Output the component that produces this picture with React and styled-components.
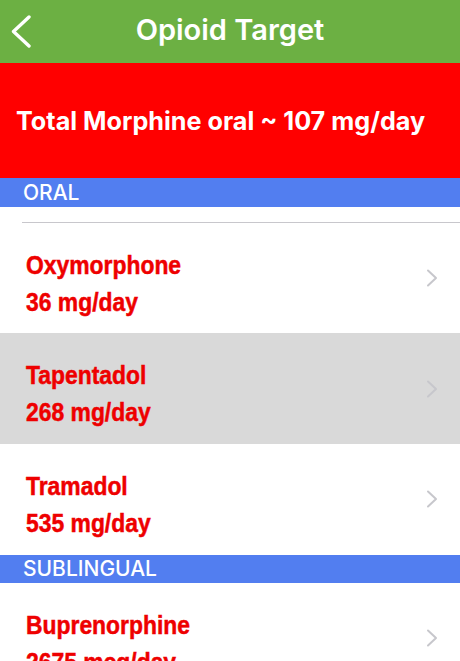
import React from "react";
import styled, { createGlobalStyle } from "styled-components";

const GlobalStyle = createGlobalStyle`
  html, body {
    margin: 0;
    padding: 0;
    background: #ffffff;
  }
  body {
    font-family: Inter, "Liberation Sans", Arial, sans-serif;
    overflow: hidden;
  }
`;

const sections = [
  {
    title: "ORAL",
    drugs: [
      { name: "Oxymorphone", dose: "36 mg/day" },
      { name: "Tapentadol", dose: "268 mg/day", selected: true },
      { name: "Tramadol", dose: "535 mg/day" },
    ],
  },
  {
    title: "SUBLINGUAL",
    drugs: [{ name: "Buprenorphine", dose: "2675 mcg/day" }],
  },
];

const BackIcon = () => (
  <svg width="22" height="34" viewBox="0 0 22 34">
    <path
      d="M19 2 L3.5 16.5 L19 31"
      fill="none"
      stroke="#ffffff"
      strokeWidth="3.4"
      strokeLinecap="round"
      strokeLinejoin="round"
    />
  </svg>
);

const Chevron = () => (
  <svg width="12" height="18" viewBox="0 0 12 18">
    <path
      d="M2 1.5 L10 9 L2 16.5"
      fill="none"
      stroke="#c7c7cc"
      strokeWidth="2"
      strokeLinecap="round"
      strokeLinejoin="round"
    />
  </svg>
);

const App = () => {
  return (
    <>
      <GlobalStyle />
      <Screen>
        <NavBar>
          <BackButton>
            <BackIcon />
          </BackButton>
          <NavTitle>Opioid Target</NavTitle>
        </NavBar>
        <Banner>Total Morphine oral ~ 107 mg/day</Banner>
        {sections.map((section, i) => (
          <section key={section.title}>
            <SectionHeader>{section.title}</SectionHeader>
            {i === 0 && <ListTop />}
            {section.drugs.map((drug) => (
              <Row key={drug.name} selected={drug.selected}>
                <RowText>
                  <DrugName>{drug.name}</DrugName>
                  <Dose>{drug.dose}</Dose>
                </RowText>
                <Chevron />
              </Row>
            ))}
          </section>
        ))}
      </Screen>
    </>
  );
};

const Screen = styled.div`
  width: 460px;
  height: 661px;
  overflow: hidden;
  display: flex;
  flex-direction: column;
`;

const NavBar = styled.header`
  position: relative;
  height: 63px;
  flex-shrink: 0;
  background: #6cb043;
  display: flex;
  align-items: center;
  justify-content: center;
  padding-bottom: 4px;
  box-sizing: border-box;
`;

const BackButton = styled.div`
  position: absolute;
  left: 10px;
  top: 15px;
  display: flex;
`;

const NavTitle = styled.h1`
  margin: 0;
  color: #ffffff;
  font-family: Inter, "Open Sans", sans-serif;
  font-weight: 600;
  font-size: 29px;
`;

const Banner = styled.div`
  height: 115px;
  flex-shrink: 0;
  background: #ff0000;
  color: #ffffff;
  display: flex;
  align-items: center;
  padding: 0 0 0 16px;
  font-family: Inter, "Open Sans", sans-serif;
  font-weight: 700;
  font-size: 25.2px;
  white-space: nowrap;
`;

const SectionHeader = styled.div`
  height: 28.5px;
  background: #527ef0;
  color: #ffffff;
  display: flex;
  align-items: center;
  padding-left: 23px;
  font-family: Inter, "Open Sans", sans-serif;
  font-weight: 500;
  font-size: 21px;
`;

const ListTop = styled.div`
  height: 15px;
  margin-left: 22px;
  border-bottom: 1px solid #c8c7cc;
`;

const Row = styled.div`
  height: 110.7px;
  display: flex;
  align-items: center;
  justify-content: space-between;
  padding: 0 22px 0 26px;
  background: ${(p) => (p.selected ? "#d9d9d9" : "#ffffff")};
`;

const RowText = styled.div`
  align-self: flex-start;
  padding-top: 26px;
  display: flex;
  flex-direction: column;
  gap: 4px;
  font-family: "Liberation Sans", Arial, sans-serif;
  font-weight: 700;
  color: #ee0000;
  -webkit-text-stroke: 0.5px #ee0000;
  transform: scaleX(0.88);
  transform-origin: left center;
  white-space: nowrap;
`;

const DrugName = styled.span`
  font-size: 26px;
  line-height: 33px;
`;

const Dose = styled.span`
  font-size: 26px;
  line-height: 33px;
`;

export default App;
